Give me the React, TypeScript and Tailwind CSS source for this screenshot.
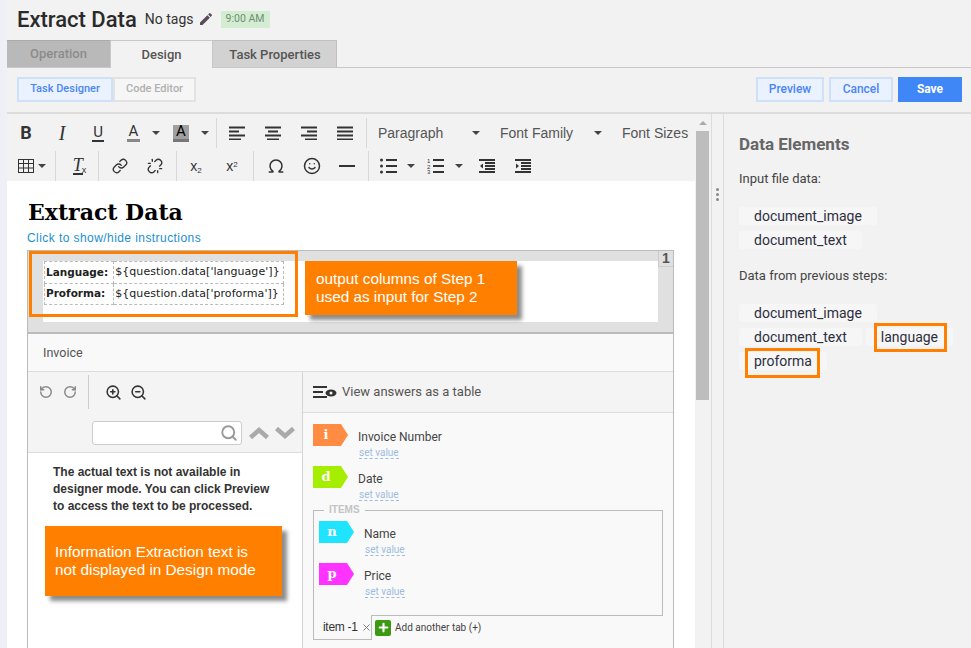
import { ReactNode } from 'react';
import { Link, Unlink, Smile, Omega, RotateCcw, RotateCw, ZoomIn, ZoomOut, Search, Plus, X } from 'lucide-react';
import { MdEdit } from 'react-icons/md';

const roboto = 'font-[Roboto,sans-serif]';
const arial = "font-['Liberation_Sans',Arial,sans-serif]";

function Caret({ className = '' }: { className?: string }) {
    return <span className={`inline-block w-0 h-0 border-x-[4px] border-x-transparent border-t-[4px] border-t-[#444] ${className}`} />;
}

function Sep({ className = '' }: { className?: string }) {
    return <span className={`w-px h-[30px] bg-[#d8d8d8] ${className}`} />;
}

function Tool({ children, w = 'w-[36px]' }: { children: ReactNode; w?: string }) {
    return <span className={`${w} h-[30px] flex items-center justify-center text-[#333]`}>{children}</span>;
}

// four bar align icons, x/width per bar
function Bars({ bars }: { bars: [number, number][] }) {
    return (
        <svg width="16" height="14" viewBox="0 0 16 14" fill="#333">
            {bars.map(([x, w], i) => <rect key={i} x={x} y={i * 4 - 0.5 + 1} width={w} height="2" />)}
        </svg>
    );
}

function TableIcon() {
    return (
        <svg width="16" height="14" viewBox="0 0 16 14" fill="none" stroke="#333" strokeWidth="1">
            <rect x="0.5" y="0.5" width="15" height="13" />
            <path d="M0.5 4.5H15.5M0.5 9H15.5M5.5 0.5V13.5M10.5 0.5V13.5" />
        </svg>
    );
}

function ListIcon({ numbered }: { numbered?: boolean }) {
    return (
        <svg width="17" height="16" viewBox="0 0 17 16" fill="#333">
            <rect x="6" y="1" width="11" height="2" />
            <rect x="6" y="7" width="11" height="2" />
            <rect x="6" y="13" width="11" height="2" />
            {numbered ? (
                <>
                    <text x="0" y="5" fontSize="6" fontFamily="'Liberation Sans', sans-serif">1</text>
                    <text x="0" y="10.5" fontSize="6" fontFamily="'Liberation Sans', sans-serif">2</text>
                    <text x="0" y="16" fontSize="6" fontFamily="'Liberation Sans', sans-serif">3</text>
                </>
            ) : (
                <>
                    <circle cx="1.5" cy="2" r="1.5" />
                    <circle cx="1.5" cy="8" r="1.5" />
                    <circle cx="1.5" cy="14" r="1.5" />
                </>
            )}
        </svg>
    );
}

function IndentIcon({ out }: { out?: boolean }) {
    return (
        <svg width="16" height="14" viewBox="0 0 16 14" fill="#333">
            <rect x="0" y="0" width="16" height="2" />
            <rect x="6" y="3" width="10" height="2" />
            <rect x="6" y="6" width="10" height="2" />
            <rect x="6" y="9" width="10" height="2" />
            <rect x="0" y="12" width="16" height="2" />
            <path d={out ? 'M4 4.5V9.5L1 7Z' : 'M1 4.5V9.5L4 7Z'} />
        </svg>
    );
}

function Chevron({ up }: { up?: boolean }) {
    return (
        <svg width="20" height="12" viewBox="0 0 20 12" fill="none" stroke="#aaa" strokeWidth="4.5">
            <path d={up ? 'M1.5 10.5L10 3L18.5 10.5' : 'M1.5 1.5L10 9L18.5 1.5'} />
        </svg>
    );
}

function EditorToolbar() {
    return (
        <div className="h-[67px] shrink-0 pt-[4px] pl-[1px] overflow-hidden">
            <div className="flex items-center h-[30px] whitespace-nowrap">
                <Tool><span className={`${roboto} font-bold text-[18px] leading-[20px] text-[#333]`}>B</span></Tool>
                <Tool><span className="font-['Liberation_Serif',serif] italic text-[20px] leading-[20px] text-[#333]">I</span></Tool>
                <Tool><span className={`${roboto} text-[15px] border-b-2 border-[#333] leading-[15px] px-px`}>U</span></Tool>
                <Tool w="w-[35px]"><span className={`${roboto} text-[15px] border-b-[3px] border-[#888] leading-[15px] px-[2px]`}>A</span></Tool>
                <Caret className="ml-[1px] mr-[13px]" />
                <span className={`${roboto} text-[15px] leading-[15px] bg-[#a0a0a0] w-[16px] h-[17px] flex items-center justify-center border-b-[3px] border-[#777] mr-[12px]`}>A</span>
                <Caret />
                <Sep className="ml-[7px] mr-[2px]" />
                <Tool><Bars bars={[[0, 16], [0, 10], [0, 16], [0, 12]]} /></Tool>
                <Tool><Bars bars={[[0, 16], [3, 10], [0, 16], [2, 12]]} /></Tool>
                <Tool><Bars bars={[[0, 16], [6, 10], [0, 16], [4, 12]]} /></Tool>
                <Tool><Bars bars={[[0, 16], [0, 16], [0, 16], [0, 16]]} /></Tool>
                <Sep className="ml-[3px] mr-[11px]" />
                <span className={`${arial} text-[14px] text-[#555] w-[94px]`}>Paragraph</span>
                <Caret />
                <span className={`${arial} text-[14px] text-[#555] ml-[20px] w-[94px]`}>Font Family</span>
                <Caret />
                <span className={`${arial} text-[14px] text-[#555] ml-[20px]`}>Font Sizes</span>
            </div>
            <div className="flex items-center h-[30px] mt-[3px] whitespace-nowrap">
                <span className="ml-[10px]"><TableIcon /></span>
                <Caret className="ml-[4px]" />
                <Sep className="ml-[9px]" />
                <Tool w="w-[42px]">
                    <span className="font-['Liberation_Serif',serif] italic text-[18px] border-b-2 border-[#333] leading-[16px] ml-[5px]">T</span>
                    <span className={`${arial} text-[9px] leading-[10px] mt-[8px] -ml-[1px]`}>x</span>
                </Tool>
                <Sep />
                <Tool w="w-[42px]"><Link size={16} /></Tool>
                <Tool w="w-[28px]"><Unlink size={16} /></Tool>
                <Sep className="ml-[7px]" />
                <Tool w="w-[38px]"><span className={`${arial} text-[14px] leading-[16px]`}>x<sub className="text-[8px]">2</sub></span></Tool>
                <Tool w="w-[34px]"><span className={`${arial} text-[14px] leading-[16px]`}>x<sup className="text-[8px]">2</sup></span></Tool>
                <Sep className="ml-[4px]" />
                <Tool w="w-[44px]"><Omega size={18} /></Tool>
                <Tool w="w-[28px]"><Smile size={18} /></Tool>
                <Tool w="w-[42px]"><span className="w-[16px] h-[2px] bg-[#333]" /></Tool>
                <Sep />
                <Tool w="w-[38px]"><ListIcon /></Tool>
                <Caret />
                <Tool w="w-[40px]"><ListIcon numbered /></Tool>
                <Caret />
                <Tool w="w-[48px]"><IndentIcon out /></Tool>
                <Tool w="w-[24px]"><IndentIcon /></Tool>
            </div>
        </div>
    );
}

function Tag({ letter, color }: { letter: string; color: string }) {
    return (
        <svg width="35" height="22" viewBox="0 0 35 22" className="shrink-0">
            <path d="M0 0H28L35 11L28 22H0Z" fill={color} />
            <text x="13" y="15" textAnchor="middle" fill="#fff" fontSize="13" fontWeight="700" fontFamily="'DejaVu Serif', serif">{letter}</text>
        </svg>
    );
}

function Answer({ letter, color, label }: { letter: string; color: string; label: string }) {
    return (
        <div className="flex h-[42px]">
            <Tag letter={letter} color={color} />
            <div className="ml-[10px] pt-[6px]">
                <div className={`${roboto} text-[12px] leading-[15px] text-[#444]`}>{label}</div>
                <span className={`${roboto} block w-fit ml-px mt-[2px] text-[10px] leading-[11px] text-[#9dbce0] border-b border-dashed border-[#9dbce0]`}>set value</span>
            </div>
        </div>
    );
}

function Chip({ children }: { children: ReactNode }) {
    return <span className={`${roboto} h-[18px] leading-[18px] px-[15px] bg-[#f6f6f6] rounded-[3px] text-[14px] text-[#2e2e3e]`}>{children}</span>;
}

function Callout({ children, className }: { children: ReactNode; className: string }) {
    return <div className={`${arial} absolute bg-[#ff8000] text-white text-[15.3px] leading-[18px] shadow-[5px_5px_4px_rgba(0,0,0,0.45)] ${className}`}>{children}</div>;
}

export default function App() {
    return (
        <div className="w-[971px] h-[648px] overflow-hidden flex bg-[#f2f2f2]">
            <div className="w-[7px] shrink-0 bg-[#eef0f8]" />
            <div className="flex-1 min-w-0 flex flex-col">
                <div className="h-[40px] shrink-0 flex items-center pl-[10px] pb-[2px]">
                    <span className={`${roboto} font-medium text-[22px] text-[#2a2a2a]`}>Extract Data</span>
                    <span className={`${roboto} text-[14px] text-[#333] ml-[8px]`}>No tags</span>
                    <MdEdit size={16} className="ml-[4px] text-[#5a4a5a]" />
                    <span className={`${roboto} ml-[7px] h-[17px] w-[49px] flex items-center justify-center bg-[#d4edd2] text-[#6d8f70] text-[10.5px]`}>9:00 AM</span>
                </div>
                <div className={`${roboto} font-medium h-[28px] shrink-0 flex border-b border-[#c8c8c8] text-[13px]`}>
                    <span className="w-[103px] h-[27px] flex items-center justify-center bg-[#b9b9b9] text-[#8c8c8c] border-t border-[#aaa]">Operation</span>
                    <span className="w-[103px] h-[28px] flex items-center justify-center bg-[#f2f2f2] text-[#555] border-t border-x border-[#c8c8c8]">Design</span>
                    <span className="w-[124px] h-[27px] flex items-center justify-center pt-[1px] pl-[1px] bg-[#d2d2d2] text-[#555] border-t border-r border-[#c0c0c0]">Task Properties</span>
                </div>
                <div className={`${roboto} font-medium h-[46px] shrink-0 flex items-center justify-between pl-[10px] pr-[9px] pb-[2px] border-b-2 border-[#dcdcdc] text-[11px]`}>
                    <div className="flex">
                        <span className="w-[96px] h-[25px] flex items-center justify-center bg-[#eaf2ff] text-[#4c86f5] border-2 border-[#cfe0fb]">Task Designer</span>
                        <span className="w-[83px] h-[25px] flex items-center justify-center bg-[#f6f6f6] text-[#b0b0b0] border-2 border-[#e2e2e2]">Code Editor</span>
                    </div>
                    <div className="flex gap-[5px] text-[12px]">
                        <span className="w-[68px] h-[25px] flex items-center justify-center bg-[#eaf2ff] text-[#4c86f5] border-2 border-[#cfe0fb]">Preview</span>
                        <span className="w-[64px] h-[25px] flex items-center justify-center bg-[#eaf2ff] text-[#4c86f5] border-2 border-[#cfe0fb]">Cancel</span>
                        <span className="w-[64px] h-[25px] flex items-center justify-center bg-[#3f86f7] text-white font-bold">Save</span>
                    </div>
                </div>
                <div className="flex-1 min-h-0 flex">
                    {/* editor */}
                    <div className="w-[688px] shrink-0 flex flex-col min-h-0 overflow-hidden">
                        <EditorToolbar />
                        <div className="flex-1 min-h-0 bg-white pl-[20px] pr-[21px] pt-[17px] relative">
                            <h1 className="font-['DejaVu_Serif',serif] font-bold text-[22px] leading-[28px] text-black ml-px">Extract Data</h1>
                            <div className={`${arial} text-[12px] leading-[14px] text-[#1b8fd0] mt-[5px] tracking-[0.43px]`}>Click to show/hide instructions</div>
                            <div className="mt-[5px] border border-[#bbb] border-b-0 bg-[#e0e0e0] h-[82px] pl-[15px] pt-[10px] relative">
                                <div className="w-[615px] h-[61px] bg-white">
                                    <table className="font-['DejaVu_Sans',sans-serif] text-[11px] text-[#222] border-collapse ml-px">
                                        <tbody>
                                            <tr className="h-[22px]">
                                                <td className="border border-dashed border-[#bbb] font-bold text-[10.5px] pl-[1px] pr-[5px]">Language:</td>
                                                <td className="border border-dashed border-[#bbb] pl-[1px] pr-[3px] tracking-[0.07px]">{"${question.data['language']}"}</td>
                                            </tr>
                                            <tr className="h-[21px]">
                                                <td className="border border-dashed border-[#bbb] font-bold text-[10.5px] pl-[1px] pr-[5px]">Proforma:</td>
                                                <td className="border border-dashed border-[#bbb] pl-[1px] pr-[3px] tracking-[0.07px]">{"${question.data['proforma']}"}</td>
                                            </tr>
                                        </tbody>
                                    </table>
                                </div>
                                <span className={`${arial} absolute top-0 right-0 w-[15px] h-[16px] flex items-center justify-center bg-[#e0e0e0] border-l border-b border-[#ccc] font-bold text-[14px] text-[#555]`}>1</span>
                                <div className="absolute left-[1px] top-0 w-[269px] h-[66px] border-[3px] border-[#ff8000]" />
                                <Callout className="left-[277px] top-[10px] w-[212px] h-[54px] pt-[9px] pl-[11px]">
                                    output columns of Step 1<br />used as input for Step 2
                                </Callout>
                            </div>
                            <div className="border border-[#bbb] border-t-2 bg-[#f9f9f9] h-[400px]">
                                <div className={`${roboto} h-[38px] pl-[15px] pt-[1px] flex items-center text-[12.5px] text-[#555] border-b border-[#dcdcdc]`}>Invoice</div>
                                <div className="flex h-full">
                                    <div className="w-[275px] shrink-0 border-r border-[#d4d4d4] bg-white relative">
                                        <div className="h-[81px] bg-[#f4f4f4] border-b border-[#dcdcdc] relative">
                                            <div className="flex items-center h-[40px]">
                                                <span className="w-[61px] h-[34px] flex items-center gap-[10px] pl-[11px] border-r border-[#ccc] text-[#888]">
                                                    <RotateCcw size={14} strokeWidth={2.5} />
                                                    <RotateCw size={14} strokeWidth={2.5} />
                                                </span>
                                                <span className="flex gap-[8px] ml-[16px] text-[#333]">
                                                    <ZoomIn size={17} strokeWidth={2.2} />
                                                    <ZoomOut size={17} strokeWidth={2.2} />
                                                </span>
                                            </div>
                                            <div className="flex items-center mt-[9px] ml-[64px]">
                                                <span className="w-[150px] h-[24px] bg-white border border-[#ccc] rounded-[3px] flex items-center justify-end pr-[3px] text-[#999]">
                                                    <Search size={18} strokeWidth={2.5} />
                                                </span>
                                                <span className="flex gap-[6px] ml-[7px]">
                                                    <Chevron up />
                                                    <Chevron />
                                                </span>
                                            </div>
                                        </div>
                                        <p className={`${arial} font-bold text-[12px] leading-[17px] text-[#333] pl-[25px] pt-[11px] w-[250px]`}>
                                            The actual text is not available in designer mode. You can click Preview to access the text to be processed.
                                        </p>
                                        <Callout className="left-[17px] top-[154px] w-[237px] h-[70px] pt-[17px] pl-[10px]">
                                            Information Extraction text is<br />not displayed in Design mode
                                        </Callout>
                                    </div>
                                    <div className="flex-1">
                                        <div className="h-[41px] bg-[#f4f4f4] border-b border-[#dcdcdc] flex items-center pl-[10px]">
                                            <svg width="24" height="12" viewBox="0 0 24 12" fill="#333">
                                                <rect x="0" y="0" width="14" height="2" />
                                                <rect x="0" y="5" width="10" height="2" />
                                                <rect x="0" y="10" width="14" height="2" />
                                                <ellipse cx="18" cy="7" rx="5.5" ry="3.5" />
                                                <circle cx="18" cy="7" r="1.5" fill="#f4f4f4" />
                                            </svg>
                                            <span className={`${roboto} ml-[5px] text-[13px] text-[#555]`}>View answers as a table</span>
                                        </div>
                                        <div className="pl-[10px] pr-[10px] pt-[11px]">
                                            <Answer letter="i" color="#ff8c42" label="Invoice Number" />
                                            <Answer letter="d" color="#a5ee00" label="Date" />
                                            <fieldset className="border border-[#bbb] h-[111px] -mt-[3px] pl-[5px] pt-[6px] w-[350px]">
                                                <legend className={`${arial} font-bold ml-[5px] px-[5px] text-[10px] leading-[10px] text-[#c4c4c4]`}>ITEMS</legend>
                                                <Answer letter="n" color="#1ee4ff" label="Name" />
                                                <Answer letter="p" color="#ff33ff" label="Price" />
                                            </fieldset>
                                            <div className="flex items-center -mt-px">
                                                <span className={`${arial} w-[59px] h-[25px] border border-t-0 border-[#bbb] bg-[#f9f9f9] flex items-center pl-[9px] text-[12px] tracking-[-0.3px] text-[#333] whitespace-nowrap relative`}>
                                                    item -1
                                                    <X size={11} className="ml-[3px] text-[#777] shrink-0" />
                                                </span>
                                                <span className="ml-[3px] w-[16px] h-[16px] rounded-[2px] bg-[#3c9a12] flex items-center justify-center">
                                                    <Plus size={13} strokeWidth={4} className="text-white" />
                                                </span>
                                                <span className={`${roboto} ml-[4px] text-[10px] text-[#444]`}>Add another tab (+)</span>
                                            </div>
                                        </div>
                                    </div>
                                </div>
                            </div>
                        </div>
                    </div>
                    {/* scrollbar */}
                    <div className="w-[16px] shrink-0 pt-[17px] relative">
                        <span className="absolute top-[7px] left-[4px] w-0 h-0 border-x-[4px] border-x-transparent border-b-[4px] border-b-[#aaa]" />
                        <div className="mx-px h-[269px] w-[13px] bg-[#bdbdbd]" />
                    </div>
                    {/* splitter */}
                    <div className="w-[13px] shrink-0 border-x border-[#dcdcdc] flex flex-col items-center gap-[2px] pt-[74px]">
                        <span className="w-[3px] h-[3px] rounded-full bg-[#888]" />
                        <span className="w-[3px] h-[3px] rounded-full bg-[#888]" />
                        <span className="w-[3px] h-[3px] rounded-full bg-[#888]" />
                    </div>
                    {/* data elements */}
                    <div className={`${roboto} flex-1 min-w-0 pl-[15px] pt-[20px] relative`}>
                        <div className="font-bold text-[17px] leading-[20px] text-[#666]">Data Elements</div>
                        <div className="text-[13px] leading-[16px] text-[#444] mt-[17px]">Input file data:</div>
                        <div className="flex flex-wrap gap-x-[4px] gap-y-[6px] mt-[20px]">
                            <Chip>document_image</Chip>
                            <Chip>document_text</Chip>
                        </div>
                        <div className="text-[13px] leading-[16px] text-[#444] mt-[19px]">Data from previous steps:</div>
                        <div className="flex flex-wrap gap-x-[4px] gap-y-[6px] mt-[20px]">
                            <Chip>document_image</Chip>
                            <Chip>document_text</Chip>
                            <Chip>language</Chip>
                            <Chip>proforma</Chip>
                        </div>
                        <div className="absolute left-[150px] top-[209px] w-[73px] h-[29px] border-[3px] border-[#ff8000]" />
                        <div className="absolute left-[21px] top-[234px] w-[75px] h-[30px] border-[3px] border-[#ff8000]" />
                    </div>
                </div>
            </div>
        </div>
    );
}
